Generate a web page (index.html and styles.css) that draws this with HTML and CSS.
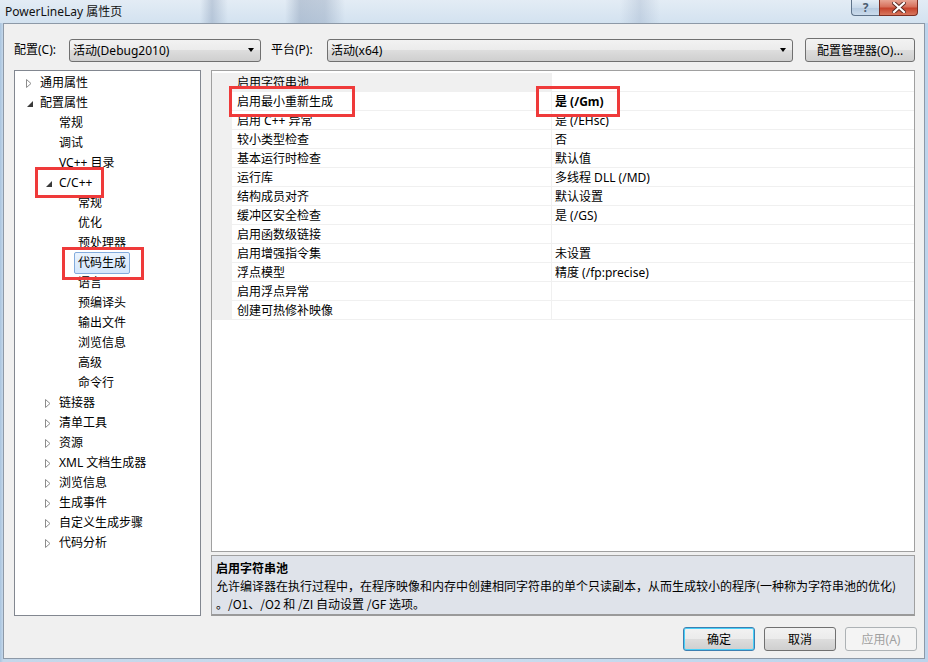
FILE: index.html
```html
<!DOCTYPE html>
<html lang="zh-CN">
<head>
<meta charset="utf-8">
<title>PowerLineLay 属性页</title>
<link rel="stylesheet" href="styles.css">
</head>
<body>
<div class="window">
  <div class="titlebar">
    <div class="title">PowerLineLay 属性页</div>
    <div class="caption-btns">
      <div class="cap help">?</div>
      <div class="cap close">
        <svg width="14" height="11" viewBox="0 0 14 11"><path d="M2 1 L12 10 M12 1 L2 10" stroke="#5a2a22" stroke-width="4" stroke-linecap="square"/><path d="M2 1 L12 10 M12 1 L2 10" stroke="#ffffff" stroke-width="2.2" stroke-linecap="square"/></svg>
      </div>
    </div>
  </div>
  <div class="client">
    <div class="toolbar">
      <span class="lbl lbl-config">配置(C):</span>
      <div class="combo combo-config"><span>活动(Debug2010)</span><i class="drop"></i></div>
      <span class="lbl lbl-platform">平台(P):</span>
      <div class="combo combo-platform"><span>活动(x64)</span><i class="drop"></i></div>
      <div class="btn btn-manager">配置管理器(O)...</div>
    </div>
    <div class="main">
      <div class="tree">
        <div class="item l1"><i class="arr"><svg class="tri" width="9" height="11" viewBox="0 0 9 11"><path d="M2.5 1.5 L7 5.5 L2.5 9.5 Z" fill="#fff" stroke="#8c8c8c"/></svg></i><span>通用属性</span></div>
        <div class="item l1"><i class="arr open"></i><span>配置属性</span></div>
        <div class="item l2"><i class="arr"></i><span>常规</span></div>
        <div class="item l2"><i class="arr"></i><span>调试</span></div>
        <div class="item l2"><i class="arr"></i><span>VC++ 目录</span></div>
        <div class="item l2"><i class="arr open"></i><span>C/C++</span></div>
        <div class="item l3"><i class="arr"></i><span>常规</span></div>
        <div class="item l3"><i class="arr"></i><span>优化</span></div>
        <div class="item l3"><i class="arr"></i><span>预处理器</span></div>
        <div class="item l3"><i class="arr"></i><span class="sel">代码生成</span></div>
        <div class="item l3"><i class="arr"></i><span>语言</span></div>
        <div class="item l3"><i class="arr"></i><span>预编译头</span></div>
        <div class="item l3"><i class="arr"></i><span>输出文件</span></div>
        <div class="item l3"><i class="arr"></i><span>浏览信息</span></div>
        <div class="item l3"><i class="arr"></i><span>高级</span></div>
        <div class="item l3"><i class="arr"></i><span>命令行</span></div>
        <div class="item l2"><i class="arr"><svg class="tri" width="9" height="11" viewBox="0 0 9 11"><path d="M2.5 1.5 L7 5.5 L2.5 9.5 Z" fill="#fff" stroke="#8c8c8c"/></svg></i><span>链接器</span></div>
        <div class="item l2"><i class="arr"><svg class="tri" width="9" height="11" viewBox="0 0 9 11"><path d="M2.5 1.5 L7 5.5 L2.5 9.5 Z" fill="#fff" stroke="#8c8c8c"/></svg></i><span>清单工具</span></div>
        <div class="item l2"><i class="arr"><svg class="tri" width="9" height="11" viewBox="0 0 9 11"><path d="M2.5 1.5 L7 5.5 L2.5 9.5 Z" fill="#fff" stroke="#8c8c8c"/></svg></i><span>资源</span></div>
        <div class="item l2"><i class="arr"><svg class="tri" width="9" height="11" viewBox="0 0 9 11"><path d="M2.5 1.5 L7 5.5 L2.5 9.5 Z" fill="#fff" stroke="#8c8c8c"/></svg></i><span>XML 文档生成器</span></div>
        <div class="item l2"><i class="arr"><svg class="tri" width="9" height="11" viewBox="0 0 9 11"><path d="M2.5 1.5 L7 5.5 L2.5 9.5 Z" fill="#fff" stroke="#8c8c8c"/></svg></i><span>浏览信息</span></div>
        <div class="item l2"><i class="arr"><svg class="tri" width="9" height="11" viewBox="0 0 9 11"><path d="M2.5 1.5 L7 5.5 L2.5 9.5 Z" fill="#fff" stroke="#8c8c8c"/></svg></i><span>生成事件</span></div>
        <div class="item l2"><i class="arr"><svg class="tri" width="9" height="11" viewBox="0 0 9 11"><path d="M2.5 1.5 L7 5.5 L2.5 9.5 Z" fill="#fff" stroke="#8c8c8c"/></svg></i><span>自定义生成步骤</span></div>
        <div class="item l2"><i class="arr"><svg class="tri" width="9" height="11" viewBox="0 0 9 11"><path d="M2.5 1.5 L7 5.5 L2.5 9.5 Z" fill="#fff" stroke="#8c8c8c"/></svg></i><span>代码分析</span></div>
      </div>
      <div class="right">
        <div class="grid">
          <div class="row selrow"><div class="gut"></div><div class="name">启用字符串池</div><div class="val"></div></div>
          <div class="row"><div class="gut"></div><div class="name">启用最小重新生成</div><div class="val bold">是 (/Gm)</div></div>
          <div class="row"><div class="gut"></div><div class="name">启用 C++ 异常</div><div class="val">是 (/EHsc)</div></div>
          <div class="row"><div class="gut"></div><div class="name">较小类型检查</div><div class="val">否</div></div>
          <div class="row"><div class="gut"></div><div class="name">基本运行时检查</div><div class="val">默认值</div></div>
          <div class="row"><div class="gut"></div><div class="name">运行库</div><div class="val">多线程 DLL (/MD)</div></div>
          <div class="row"><div class="gut"></div><div class="name">结构成员对齐</div><div class="val">默认设置</div></div>
          <div class="row"><div class="gut"></div><div class="name">缓冲区安全检查</div><div class="val">是 (/GS)</div></div>
          <div class="row"><div class="gut"></div><div class="name">启用函数级链接</div><div class="val"></div></div>
          <div class="row"><div class="gut"></div><div class="name">启用增强指令集</div><div class="val">未设置</div></div>
          <div class="row"><div class="gut"></div><div class="name">浮点模型</div><div class="val">精度 (/fp:precise)</div></div>
          <div class="row"><div class="gut"></div><div class="name">启用浮点异常</div><div class="val"></div></div>
          <div class="row"><div class="gut"></div><div class="name">创建可热修补映像</div><div class="val"></div></div>
        </div>
        <div class="desc">
          <div class="desc-title">启用字符串池</div>
          <div class="desc-text">允许编译器在执行过程中，在程序映像和内存中创建相同字符串的单个只读副本，从而生成较小的程序(一种称为字符串池的优化)</div>
          <div class="desc-text">。/O1、/O2 和 /ZI 自动设置 /GF 选项。</div>
        </div>
      </div>
    </div>
    <div class="footer">
      <div class="btn btn-ok">确定</div>
      <div class="btn">取消</div>
      <div class="btn disabled">应用(A)</div>
    </div>
  </div>
  <div class="mark mark-cpp"></div>
  <div class="mark mark-codegen"></div>
  <div class="mark mark-name"></div>
  <div class="mark mark-val"></div>
</div>
</body>
</html>
```

FILE: styles.css
```css
* { box-sizing: border-box; }
html, body { margin: 0; padding: 0; }
body {
  width: 928px;
  height: 662px;
  overflow: hidden;
  font-family: "Noto Sans", "Noto Sans CJK SC", sans-serif;
  font-size: 12px;
  color: #000;
}
.window {
  position: relative;
  width: 928px;
  height: 662px;
  display: flex;
  flex-direction: column;
  background: linear-gradient(90deg, #a9c4de 0, #c4d7ea 3px, #c9dcee 50%, #bcd4ec 100%);
  padding: 0 3px 3px 3px;
}
.titlebar {
  height: 23px;
  margin: 0 -3px;
  padding: 0 10px 0 5px;
  display: flex;
  justify-content: space-between;
  align-items: flex-start;
  background:
    linear-gradient(90deg, rgba(255,255,255,0) 200px, rgba(120,140,170,0.35) 212px, rgba(255,255,255,0) 228px, rgba(255,255,255,0) 285px, rgba(110,130,160,0.35) 300px, rgba(110,130,160,0.3) 325px, rgba(255,255,255,0) 345px, rgba(255,255,255,0) 620px, rgba(130,150,180,0.25) 640px, rgba(255,255,255,0) 660px),
    linear-gradient(180deg, #e3ecf5 0, #d3e2f0 100%);
}
.title {
  line-height: 24px;
  font-size: 12px;
  color: #111;
}
.caption-btns { display: flex; }
.cap {
  height: 16px;
  border: 1px solid #5f738a;
  border-top: none;
  display: flex;
  align-items: center;
  justify-content: center;
}
.help {
  width: 28px;
  border-radius: 0 0 0 4px;
  border-right: none;
  background: linear-gradient(180deg, #e4edf6 0, #c9d9ea 50%, #b5c9df 51%, #cbdbec 100%);
  color: #4d5d70;
  font-weight: bold;
  font-size: 12px;
  line-height: 14px;
}
.close {
  width: 39px;
  border-radius: 0 0 4px 0;
  background: linear-gradient(180deg, #e8a493 0, #d7715c 45%, #c6432c 55%, #d8775e 100%);
  border-color: #7d2e22;
}
.client {
  flex: 1;
  background: #f0f0f0;
  border: 1px solid #8d99a7;
  padding: 14px 9px 0 10px;
  display: flex;
  flex-direction: column;
}
.toolbar {
  display: flex;
  align-items: center;
  height: 24px;
}
.lbl { line-height: 24px; flex: none; white-space: nowrap; }
.lbl-config { width: 55px; }
.lbl-platform { width: 56px; margin-left: 10px; }
.combo {
  flex: none;
  height: 23px;
  border: 1px solid #707070;
  border-radius: 3px;
  background: linear-gradient(180deg, #f2f2f2 0, #ebebeb 49%, #dddddd 50%, #cfcfcf 100%);
  display: flex;
  align-items: center;
  justify-content: space-between;
  padding: 0 5px 0 3px;
}
.combo-config { width: 192px; }
.combo-platform { width: 466px; }
.drop {
  width: 0; height: 0;
  border-left: 3.5px solid transparent;
  border-right: 3.5px solid transparent;
  border-top: 4px solid #000;
  margin-right: 1px;
}
.btn {
  flex: none;
  height: 24px;
  border: 1px solid #707070;
  border-radius: 3px;
  background: linear-gradient(180deg, #f2f2f2 0, #ebebeb 49%, #dddddd 50%, #cfcfcf 100%);
  display: flex;
  align-items: center;
  justify-content: center;
  width: 72px;
}
.btn-manager { width: 110px; margin-left: 12px; }
.main {
  display: flex;
  margin-top: 8px;
  height: 546px;
  gap: 10px;
}
.tree {
  flex: none;
  width: 187px;
  background: #fff;
  border: 1px solid #828790;
  padding-top: 2px;
}
.item {
  height: 20px;
  display: flex;
  align-items: center;
  padding-left: 9px;
  line-height: 20px;
  white-space: nowrap;
}
.item.l2 { padding-left: 28px; }
.item.l3 { padding-left: 47px; }
.arr {
  width: 16px;
  height: 20px;
  flex: none;
  position: relative;
  display: flex;
  align-items: center;
}
.tri { display: block; margin-top: 1px; }
.arr.open::before {
  content: "";
  position: absolute;
  left: 3px; top: 8px;
  width: 0; height: 0;
  border-bottom: 6px solid #3a3a3a;
  border-left: 6px solid transparent;
}
.sel {
  margin-left: -4px;
  padding: 0 3px;
  border: 1px solid #84acdd;
  border-radius: 2px;
  line-height: 20px;
  background: linear-gradient(180deg, #eaf3fd 0, #d3e6fc 100%);
}
.right {
  flex: 1;
  min-width: 0;
  display: flex;
  flex-direction: column;
}
.grid {
  flex: 1;
  background: #fff;
  border: 1px solid #a0a0a0;
  padding-top: 2px;
}
.row {
  display: flex;
  height: 19px;
  line-height: 19px;
}
.gut { width: 20px; background: #f0f0f0; flex: none; }
.name {
  width: 320px;
  flex: none;
  padding-left: 5px;
  border-bottom: 1px solid #f0f0f0;
  border-right: 1px solid #f0f0f0;
  white-space: nowrap;
}
.val {
  flex: 1;
  padding-left: 3px;
  border-bottom: 1px solid #f0f0f0;
  white-space: nowrap;
}
.selrow .name { background: #f0f0f0; }
.bold { font-weight: bold; }
.desc {
  height: 61px;
  margin-top: 3px;
  border: 1px solid #a0a0a0;
  border-bottom: 2px solid #9a9a9a;
  background: #dfe3ea;
  padding: 3px 4px 0 4px;
  line-height: 18px;
}
.desc-title { font-weight: bold; font-family: "Noto Sans CJK SC", sans-serif; }
.desc-text { font-family: "Noto Sans CJK SC", sans-serif; white-space: nowrap; }
.footer {
  display: flex;
  justify-content: flex-end;
  gap: 9px;
  margin-top: 11px;
  margin-right: -2px;
}
.btn-ok {
  border-color: #3c7fb1;
  box-shadow: inset 0 0 0 1px #48d0f8;
}
.disabled {
  color: #a0a0a0;
  border-color: #adb2b5;
  background: #f4f4f4;
}
.mark {
  position: absolute;
  border: 3px solid #ef3a3a;
}
.mark-cpp { left: 35px; top: 167px; width: 69px; height: 31px; }
.mark-codegen { left: 62px; top: 247px; width: 82px; height: 33px; }
.mark-name { left: 229px; top: 86px; width: 126px; height: 31px; }
.mark-val { left: 536px; top: 86px; width: 84px; height: 31px; }
```
